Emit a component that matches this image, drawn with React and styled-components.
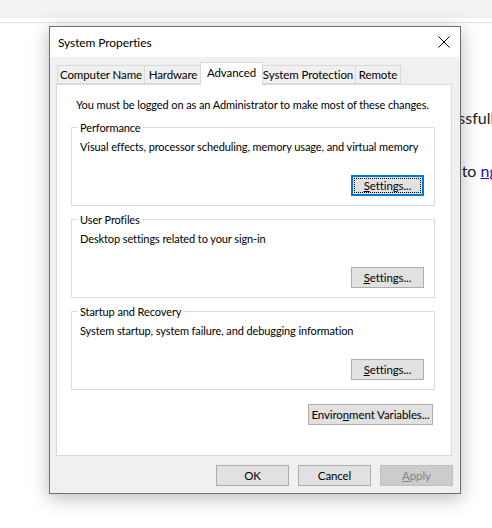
import React from 'react'
import styled, { createGlobalStyle } from 'styled-components'

const GlobalStyle = createGlobalStyle`
  html, body {
    margin: 0;
    padding: 0;
    background: #fff;
  }
  body {
    width: 492px;
    height: 528px;
    overflow: hidden;
    font-family: "Liberation Sans", Arial, sans-serif;
  }
`

const tabs = [
  { label: 'Computer Name', w: 88 },
  { label: 'Hardware', w: 58 },
  { label: 'Advanced', w: 63, active: true },
  { label: 'System Protection', w: 96 },
  { label: 'Remote', w: 46 },
]

const groups = [
  {
    title: 'Performance',
    text: 'Visual effects, processor scheduling, memory usage, and virtual memory',
    focused: true,
  },
  { title: 'User Profiles', text: 'Desktop settings related to your sign-in' },
  { title: 'Startup and Recovery', text: 'System startup, system failure, and debugging information' },
]

export default function App() {
  return (
    <>
      <GlobalStyle />
      <Page>
        <BrowserBar />
        <Divider />
        <Article>
          <Line $indent={419}>successfully</Line>
          <Line $indent={411}>Sign in to <a href="#">ngrok</a></Line>
        </Article>
      </Page>

      <Dialog>
        <TitleBar>
          <span>System Properties</span>
          <Close>
            <svg width="12" height="12" viewBox="0 0 12 12">
              <path d="M0.5 0.5 L11.5 11.5 M11.5 0.5 L0.5 11.5" stroke="#000" strokeWidth="1" fill="none" />
            </svg>
          </Close>
        </TitleBar>
        <Body>
          <TabStrip>
            {tabs.map(t => (
              <Tab key={t.label} $w={t.w} $active={t.active}>{t.label}</Tab>
            ))}
          </TabStrip>
          <Panel>
            <Notice>You must be logged on as an Administrator to make most of these changes.</Notice>
            {groups.map(g => (
              <Group key={g.title}>
                <legend>{g.title}</legend>
                <GroupText>{g.text}</GroupText>
                <ButtonRow>
                  <Button $focused={g.focused}><u>S</u>ettings...</Button>
                </ButtonRow>
              </Group>
            ))}
            <EnvRow>
              <Button $w={125}>Enviro<u>n</u>ment Variables...</Button>
            </EnvRow>
          </Panel>
          <Footer>
            <Button>OK</Button>
            <Button>Cancel</Button>
            <Button disabled><u>A</u>pply</Button>
          </Footer>
        </Body>
      </Dialog>
    </>
  )
}

const Page = styled.div`
  width: 492px;
  height: 528px;
`

const BrowserBar = styled.div`
  height: 18px;
  background: #f1f2f3;
`

const Divider = styled.div`
  margin-top: 4px;
  height: 1px;
  background: #e4e4e4;
`

const Article = styled.div`
  padding-top: 82px;
  white-space: nowrap;
  font-family: Lato, "Liberation Sans", sans-serif;
  font-size: 16px;
  color: #222;
`

const Line = styled.p`
  margin: 0 0 28px 0;
  padding-left: ${p => p.$indent}px;
  line-height: 25px;
  a {
    color: #1a0dab;
  }
`

const Dialog = styled.div`
  position: absolute;
  left: 49px;
  top: 26px;
  width: 412px;
  height: 468px;
  box-sizing: border-box;
  border: 1px solid #6e6e6e;
  background: #f0f0f0;
  box-shadow: 0 4px 18px rgba(0, 0, 0, 0.28);
  display: flex;
  flex-direction: column;
  font-family: Lato, "Liberation Sans", sans-serif;
  font-size: 11px;
  letter-spacing: -0.1px;
  color: #000;
`

const TitleBar = styled.div`
  height: 30px;
  flex: none;
  background: #fff;
  display: flex;
  align-items: center;
  justify-content: space-between;
  padding-left: 8px;
  font-size: 12px;
`

const Close = styled.div`
  width: 32px;
  height: 30px;
  display: flex;
  align-items: center;
  justify-content: center;
`

const Body = styled.div`
  flex: 1;
  display: flex;
  flex-direction: column;
  padding: 5px 8px 0 6px;
`

const TabStrip = styled.div`
  display: flex;
  align-items: flex-end;
  height: 22px;
  padding-left: 1px;
  position: relative;
  z-index: 1;
`

const Tab = styled.div`
  box-sizing: border-box;
  width: ${p => p.$w}px;
  height: ${p => (p.$active ? 23 : 19)}px;
  margin: ${p => (p.$active ? '0 -2px -1px -2px' : '0 0 0 -1px')};
  border: 1px solid #d9d9d9;
  border-bottom: ${p => (p.$active ? 'none' : '1px solid #d9d9d9')};
  background: ${p => (p.$active ? '#fff' : '#f0f0f0')};
  display: flex;
  align-items: ${p => (p.$active ? 'flex-start' : 'center')};
  padding-top: ${p => (p.$active ? '3px' : '0')};
  justify-content: center;
  white-space: nowrap;
  font-size: 11.5px;
  position: relative;
  z-index: ${p => (p.$active ? 2 : 1)};
  &:first-child {
    margin-left: 0;
  }
`

const Panel = styled.div`
  box-sizing: border-box;
  height: 372px;
  border: 1px solid #d9d9d9;
  background: #fff;
  padding: 13px 16px 0 14px;
  display: flex;
  flex-direction: column;
`

const Notice = styled.div`
  line-height: 14px;
  padding-left: 5px;
  margin-bottom: 8px;
  white-space: nowrap;
`

const Group = styled.fieldset`
  margin: 0 0 6px 0;
  padding: 0 10px 9px 8px;
  border: 1px solid #dcdcdc;
  min-width: 0;
  legend {
    padding: 0 2px;
    margin-left: -2px;
    line-height: 15px;
  }
`

const GroupText = styled.div`
  margin-top: 5px;
  line-height: 14px;
  white-space: nowrap;
`

const ButtonRow = styled.div`
  display: flex;
  justify-content: flex-end;
  margin-top: 21px;
`

const EnvRow = styled.div`
  display: flex;
  justify-content: flex-end;
  margin-top: 8px;
  padding-right: 2px;
`

const Button = styled.button`
  position: relative;
  box-sizing: border-box;
  width: ${p => p.$w || 73}px;
  height: 21px;
  padding: 0;
  font-family: inherit;
  font-size: 11.5px;
  letter-spacing: inherit;
  color: #000;
  background: #e1e1e1;
  border: ${p => (p.$focused ? '2px solid #0078d7' : '1px solid #adadad')};
  border-radius: 0;
  white-space: nowrap;
  u {
    text-decoration-thickness: 1px;
  }
  &::after {
    content: '';
    display: ${p => (p.$focused ? 'block' : 'none')};
    position: absolute;
    inset: 1px;
    border: 1px dotted #000;
  }
  &:disabled {
    background: #cccccc;
    border-color: #bfbfbf;
    color: #838383;
  }
`

const Footer = styled.div`
  display: flex;
  justify-content: flex-end;
  gap: 9px;
  padding-top: 9px;
  margin-right: -1px;
`
